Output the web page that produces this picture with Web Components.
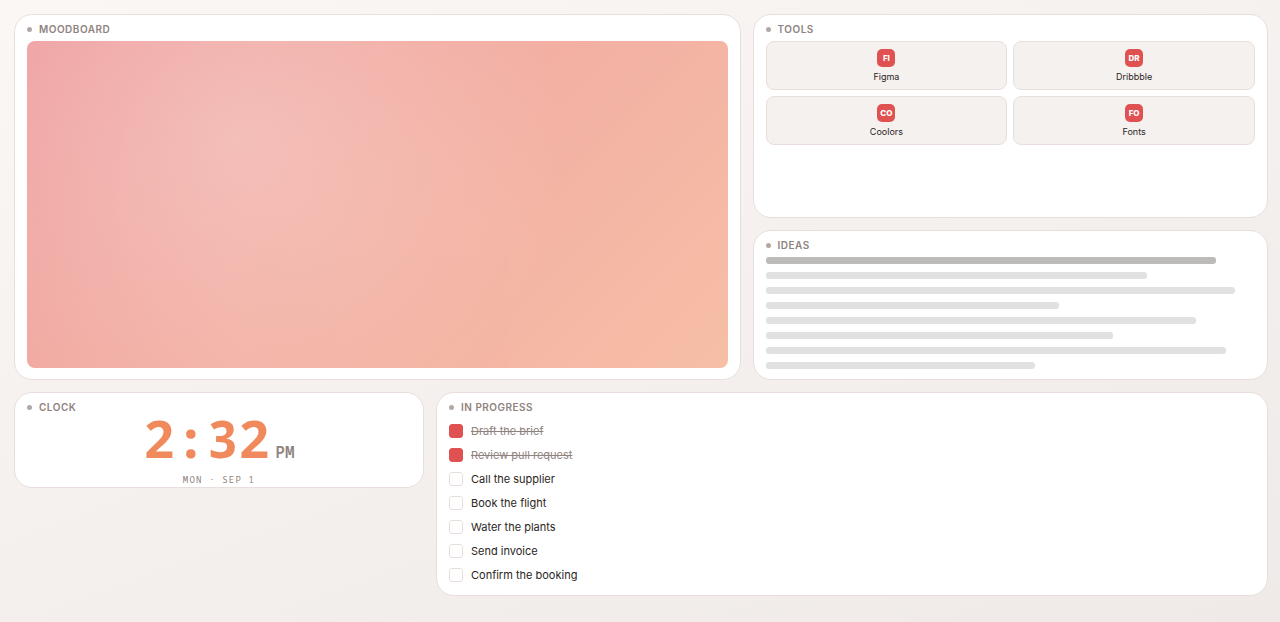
<!DOCTYPE html>
<html lang="en">
<head>
<meta charset="utf-8">
<title>Dashboard</title>
<style>
html { min-height: 100%; background: linear-gradient(160deg, #fbf7f4, #efeae7); }
body { margin: 0; font-family: Inter, "Liberation Sans", sans-serif; color: #2a2523;
  --accent: #e05252; --accent-2: #f08a5d; --muted: #8f8380; --line: #e8dfdc; --tile: #f5f1ee; }
</style>
</head>
<body>
<dash-board>
  <dash-card label="Moodboard" style="--cols:7;--rows:7"><mood-board></mood-board></dash-card>
  <dash-card label="Tools" style="--cols:5;--rows:4">
    <tool-grid>
      <tool-link code="FI">Figma</tool-link>
      <tool-link code="DR">Dribbble</tool-link>
      <tool-link code="CO">Coolors</tool-link>
      <tool-link code="FO">Fonts</tool-link>
    </tool-grid>
  </dash-card>
  <dash-card label="Ideas" style="--cols:5;--rows:3"><idea-lines widths="92 78 96 60 88 71 94 55"></idea-lines></dash-card>
  <dash-card label="Clock" style="--cols:4;--rows:2"><clock-face time="2:32" period="PM" date="MON · SEP 1"></clock-face></dash-card>
  <dash-card label="In progress" style="--cols:8;--rows:4">
    <task-list>
      <task-item done>Draft the brief</task-item>
      <task-item done>Review pull request</task-item>
      <task-item>Call the supplier</task-item>
      <task-item>Book the flight</task-item>
      <task-item>Water the plants</task-item>
      <task-item>Send invoice</task-item>
      <task-item>Confirm the booking</task-item>
    </task-list>
  </dash-card>
</dash-board>
<script>
const define = (name, render) => customElements.define(name, class extends HTMLElement {
  constructor() {
    super();
    this.attachShadow({ mode: "open" }).innerHTML = render(this);
  }
});

define("dash-board", () => `
  <style>
    :host { display: grid; grid-template-columns: repeat(12, minmax(0, 1fr)); grid-auto-rows: 42px;
      gap: 12px; padding: 14px 12px 14px 14px; }
  </style><slot></slot>`);

define("dash-card", el => `
  <style>
    :host { display: flex; flex-direction: column; gap: 5px; box-sizing: border-box; min-width: 0;
      grid-column: span var(--cols); grid-row: span var(--rows);
      padding: 8px 12px 11px; overflow: hidden;
      background: #fff; border: 1px solid var(--line); border-radius: 18px; }
    h2 { display: flex; align-items: center; gap: 7px; margin: 0; color: var(--muted);
      font-size: 10px; line-height: 13px; font-weight: 600; letter-spacing: .05em; text-transform: uppercase; }
    h2::before { content: ""; width: 5px; height: 5px; border-radius: 50%; background: #b0a8a5; }
    .body { flex: 1; min-height: 0; display: grid; grid-template-rows: minmax(0, 1fr); }
  </style>
  <h2>${el.getAttribute("label")}</h2>
  <div class="body"><slot></slot></div>`);

define("mood-board", () => `
  <style>
    :host { display: block; border-radius: 8px; opacity: .55;
      background: radial-gradient(circle at 30% 30%, rgba(255,255,255,.25), transparent 60%),
        linear-gradient(135deg, var(--accent), var(--accent-2)); }
  </style>`);

define("tool-grid", () => `
  <style>
    :host { display: grid; grid-template-columns: 1fr 1fr; gap: 6px; align-content: start; }
  </style><slot></slot>`);

define("tool-link", el => `
  <style>
    :host { display: block; }
    a { display: flex; flex-direction: column; align-items: center; gap: 4px; padding: 7px;
      background: var(--tile); border: 1px solid var(--line); border-radius: 8px;
      color: inherit; text-decoration: none; font-size: 9px; line-height: 11px; }
    .badge { width: 18px; border-radius: 5px; background: var(--accent); color: #fff;
      font-size: 8px; line-height: 18px; font-weight: 800; text-align: center; }
  </style>
  <a href="#"><span class="badge">${el.getAttribute("code")}</span><span><slot></slot></span></a>`);

define("idea-lines", el => `
  <style>
    :host { display: flex; flex-direction: column; gap: 8px; }
    i { flex: none; height: 7px; border-radius: 3px; background: #e1e1e1; }
    i:first-of-type { background: #bcbbb9; }
  </style>
  ${el.getAttribute("widths").split(" ").map(w => `<i style="width:${w}%"></i>`).join("")}`);

define("clock-face", el => `
  <style>
    :host { display: flex; flex-direction: column; align-items: center; justify-content: center; gap: 9px;
      padding-top: 2px;
      font-family: "Noto Sans Mono", "DejaVu Sans Mono", monospace; color: var(--muted); }
    .time { display: flex; align-items: baseline; gap: 5px; line-height: 54px; }
    b { font-size: 52px; letter-spacing: .01em; color: var(--accent-2); }
    .period { font-size: 16px; line-height: 16px; font-weight: 600; }
    .date { font-size: 9px; line-height: 12px; letter-spacing: .13em; }
  </style>
  <div class="time"><b>${el.getAttribute("time")}</b><span class="period">${el.getAttribute("period")}</span></div>
  <div class="date">${el.getAttribute("date")}</div>`);

define("task-list", () => `
  <style>
    :host { display: flex; flex-direction: column; gap: 10px; padding-top: 5px; }
  </style><slot></slot>`);

define("task-item", el => `
  <style>
    :host { display: block; }
    label { display: flex; align-items: center; gap: 8px; font-size: 11px; line-height: 14px; }
    input { appearance: none; box-sizing: border-box; flex: none; width: 14px; height: 14px; margin: 0;
      border: 1px solid var(--line); border-radius: 3px; background: #fff; }
    input:checked { background: var(--accent); border-color: var(--accent); }
    input:checked + span { color: var(--muted); text-decoration: line-through; }
  </style>
  <label><input type="checkbox"${el.hasAttribute("done") ? " checked" : ""}><span><slot></slot></span></label>`);
</script>
</body>
</html>
